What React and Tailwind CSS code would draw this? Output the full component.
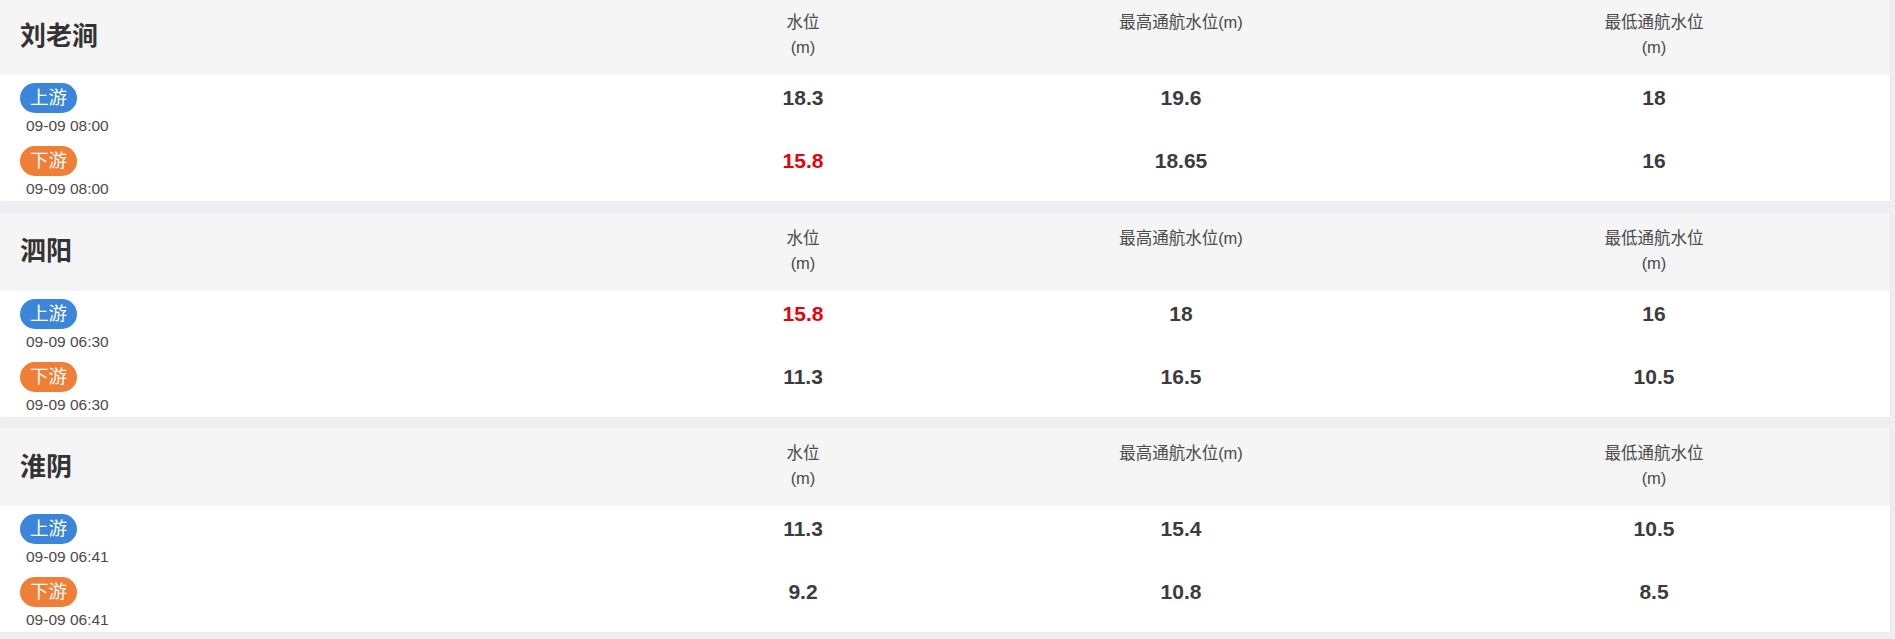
const STATIONS = [
  {
    name: '刘老涧',
    rows: [
      { side: '上游', time: '09-09 08:00', level: '18.3', high: '19.6', low: '18', alert: false },
      { side: '下游', time: '09-09 08:00', level: '15.8', high: '18.65', low: '16', alert: true },
    ],
  },
  {
    name: '泗阳',
    rows: [
      { side: '上游', time: '09-09 06:30', level: '15.8', high: '18', low: '16', alert: true },
      { side: '下游', time: '09-09 06:30', level: '11.3', high: '16.5', low: '10.5', alert: false },
    ],
  },
  {
    name: '淮阴',
    rows: [
      { side: '上游', time: '09-09 06:41', level: '11.3', high: '15.4', low: '10.5', alert: false },
      { side: '下游', time: '09-09 06:41', level: '9.2', high: '10.8', low: '8.5', alert: false },
    ],
  },
];

const font = { fontFamily: '"Liberation Sans", "Noto Sans CJK SC", sans-serif' };

function Badge({ side }) {
  const up = side === '上游';
  return (
    <span
      className={`inline-block h-[30px] px-[10px] rounded-full text-[18.5px] leading-[30px] text-white ${
        up ? 'bg-[#3b86d9]' : 'bg-[#ef7e36]'
      }`}
    >
      {side}
    </span>
  );
}

function StationCard({ station }) {
  return (
    <div className="w-[1890px] mb-[11.5px] bg-white shadow-[1px_0_2px_rgba(0,0,0,0.04)]">
      {/* Header */}
      <div className="grid grid-cols-[662px_282px_474px_1fr] h-[78px] bg-[#f5f5f6] text-[#4a4a4a]">
        <div className="flex items-center pl-[20px] text-[26px] font-bold text-[#333]">{station.name}</div>
        <div className="pt-[13px] text-center text-[16.5px] leading-[25px]">
          水位
          <br />
          (m)
        </div>
        <div className="pt-[13px] text-center text-[16.5px] leading-[25px]">最高通航水位(m)</div>
        <div className="pt-[13px] text-center text-[16.5px] leading-[25px]">
          最低通航水位
          <br />
          (m)
        </div>
      </div>

      {/* Body */}
      {station.rows.map((row) => (
        <div key={row.side} className="grid grid-cols-[662px_282px_474px_1fr] h-[63px] pt-2">
          <div className="pl-5">
            <Badge side={row.side} />
            <div className="pl-[6px] text-[15.5px] leading-[26px] text-[#4a4a4a]">{row.time}</div>
          </div>
          <div
            className={`text-center text-[21px] font-bold leading-[30px] ${
              row.alert ? 'text-[#e8000b]' : 'text-[#3a3c40]'
            }`}
          >
            {row.level}
          </div>
          <div className="text-center text-[21px] font-bold leading-[30px] text-[#3a3c40]">{row.high}</div>
          <div className="text-center text-[21px] font-bold leading-[30px] text-[#3a3c40]">{row.low}</div>
        </div>
      ))}
    </div>
  );
}

export default function App() {
  return (
    <div className="w-[1895px] h-[639px] overflow-hidden bg-[#eeeef3]" style={font}>
      <div className="-mt-[3px]">
        {STATIONS.map((s) => (
          <StationCard key={s.name} station={s} />
        ))}
      </div>
    </div>
  );
}
